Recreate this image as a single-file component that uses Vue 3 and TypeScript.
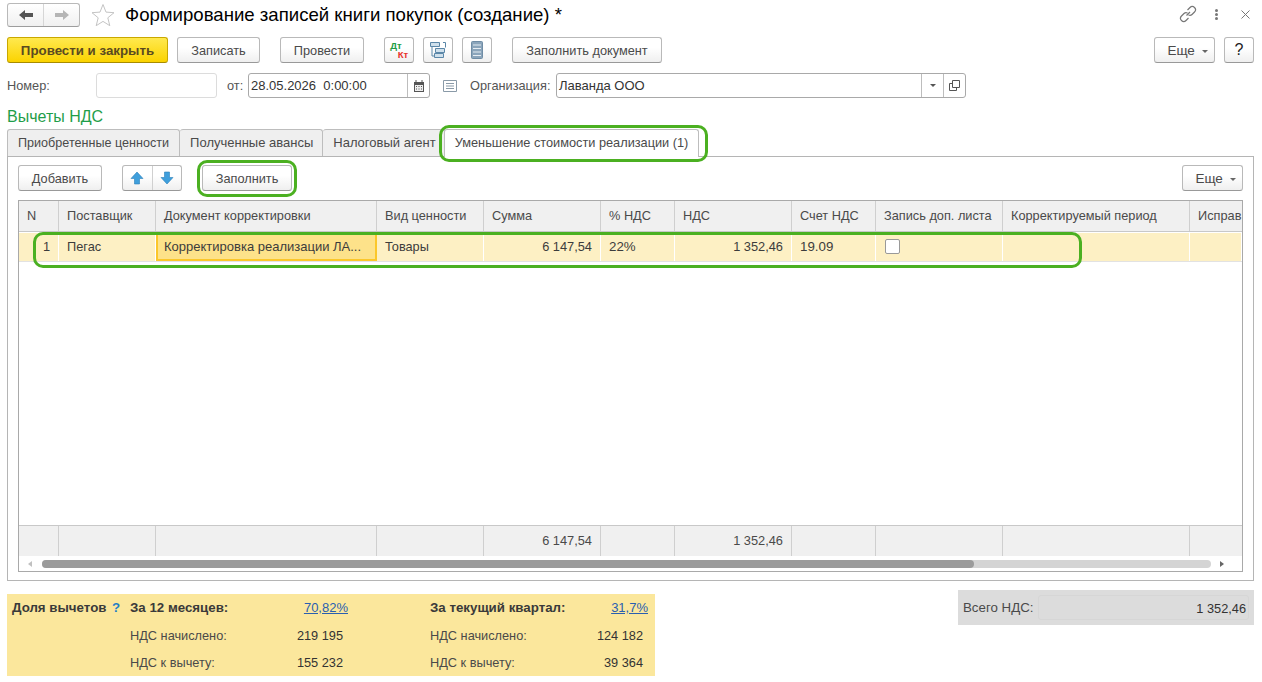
<template>
  <div class="page">
    <header class="title-row">
      <div class="nav-group">
        <button class="nav-btn">
          <svg width="16" height="12" viewBox="0 0 16 12"><path d="M1 6 7 1v3h8v4H7v3z" fill="#555" /></svg>
        </button>
        <button class="nav-btn">
          <svg width="16" height="12" viewBox="0 0 16 12"><path d="M15 6 9 1v3H1v4h8v3z" fill="#b5b5b5" /></svg>
        </button>
      </div>
      <svg class="star" width="24" height="24" viewBox="0 0 24 24">
        <path d="M12 1.5l3 7.6 8 .6-6.200 5.100 2 7.900L12 18.400 5.200 22.700l2-7.900L1 9.700l8-.6z" fill="#fff" stroke="#c4c4c4" />
      </svg>
      <h1 class="title">Формирование записей книги покупок (создание) *</h1>
      <div class="window-tools">
        <svg width="18" height="18" viewBox="0 0 18 18" fill="none" stroke="#777" stroke-width="1.200">
          <path d="M7.500 10.500 11 7M8.500 5l2.500-2.500a3 3 0 0 1 4.500 4.500L13 9.500a3 3 0 0 1-3.500.5M9.500 13 7 15.500A3 3 0 0 1 2.500 11L5 8.500a3 3 0 0 1 3.500-.5" />
        </svg>
        <span class="dots"><i></i><i></i><i></i></span>
        <svg width="11" height="11" viewBox="0 0 11 11" stroke="#777" stroke-width="1"><path d="M1.500 1.500l8 8M9.500 1.500l-8 8" /></svg>
      </div>
    </header>

    <div class="toolbar">
      <button class="btn primary">Провести и закрыть</button>
      <button class="btn w-save">Записать</button>
      <button class="btn w-post">Провести</button>
      <button class="btn icon dtkt"><span class="dt">Дт</span><span class="kt">Кт</span></button>
      <button class="btn icon">
        <svg width="18" height="18" viewBox="0 0 18 18" fill="none" stroke="#5b87a8">
          <path d="M1.500 1.500h9v4h-9zM6.500 7.500h9v4h-9zM5.500 12.500h9v4h-9z" fill="#cfe0ec" />
          <path d="M3 5.500V15h2M14 1.500h2.500v5" />
        </svg>
      </button>
      <button class="btn icon">
        <svg width="12" height="18" viewBox="0 0 12 18">
          <rect x="0.500" y="0.500" width="11" height="17" rx="1" fill="#8ba5bb" stroke="#6f8ca5" />
          <path d="M2 4h8M2 7.500h8M2 11h8M2 14.500h8" stroke="#e6edf3" stroke-width="1.200" />
        </svg>
      </button>
      <button class="btn w-fill-doc">Заполнить документ</button>
      <button class="btn more more-top">Еще <span class="caret"></span></button>
      <button class="btn help">?</button>
    </div>

    <div class="form-row">
      <label class="lbl w-num">Номер:</label>
      <div class="field number-field"></div>
      <label class="lbl from">от:</label>
      <div class="field date-field">
        <span class="field-text">28.05.2026&nbsp; 0:00:00</span>
        <span class="field-btn">
          <svg width="10" height="12" viewBox="0 0 10 12">
            <path d="M0 2h10v10H0z" fill="#555" />
            <path d="M2 0v3M8 0v3" stroke="#555" />
            <path d="M1 5h8v6H1z" fill="#eee" />
            <path d="M2 6.500h1M4.500 6.500h1M7 6.500h1M2 9h1M4.500 9h1M7 9h1" stroke="#555" />
          </svg>
        </span>
      </div>
      <svg class="doc-icon" width="14" height="12" viewBox="0 0 14 12" fill="none" stroke="#8a9aa8">
        <path d="M.5.500h13v11H.5zM3 3.500h8M3 6h8M3 8.500h8" />
      </svg>
      <label class="lbl org">Организация:</label>
      <div class="field org-field">
        <span class="field-text">Лаванда ООО</span>
        <span class="field-btn"><span class="caret dark"></span></span>
        <span class="field-btn">
          <svg width="11" height="11" viewBox="0 0 11 11" fill="none" stroke="#555">
            <path d="M3.500.500h7v7h-7zM3.500 3.500h-3v7h7v-3" />
          </svg>
        </span>
      </div>
    </div>

    <div class="section-title">Вычеты НДС</div>

    <nav class="tabs">
      <div v-for="t in tabs" :key="t" class="tab">{{ t }}</div>
      <div class="tab active">
        Уменьшение стоимости реализации (1)
        <span class="mark mark-tab"></span>
      </div>
    </nav>

    <section class="panel">
      <div class="panel-bar">
        <button class="btn w-add">Добавить</button>
        <div class="arrows">
          <button class="arrow-btn">
            <svg width="14" height="14" viewBox="0 0 14 14"><path d="M7 1l6 6.500H9.500V13h-5V7.500H1z" fill="#3f9fdc" stroke="#2b7fb8" stroke-width=".6" /></svg>
          </button>
          <button class="arrow-btn">
            <svg width="14" height="14" viewBox="0 0 14 14"><path d="M7 13 1 6.500h3.500V1h5v5.500H13z" fill="#3f9fdc" stroke="#2b7fb8" stroke-width=".6" /></svg>
          </button>
        </div>
        <button class="btn w-fill">
          Заполнить
          <span class="mark mark-fill"></span>
        </button>
        <button class="btn more more-table">Еще <span class="caret"></span></button>
      </div>

      <div class="table">
        <div class="grid head">
          <div v-for="h in headers" :key="h" class="cell">{{ h }}</div>
        </div>
        <div class="grid row">
          <div class="cell right">1</div>
          <div class="cell">Пегас</div>
          <div class="cell current">Корректировка реализации ЛА...</div>
          <div class="cell">Товары</div>
          <div class="cell right">6 147,54</div>
          <div class="cell numeric">22%</div>
          <div class="cell right">1 352,46</div>
          <div class="cell numeric">19.09</div>
          <div class="cell"><span class="check"></span></div>
          <div class="cell"></div>
          <div class="cell"></div>
          <span class="mark mark-row"></span>
        </div>
        <div class="table-space"></div>
        <div class="grid foot">
          <div v-for="(f, i) in footer" :key="i" class="cell right">{{ f }}</div>
        </div>
        <div class="scrollbar">
          <span class="sb-arrow left"></span>
          <div class="sb-track"><div class="sb-thumb"></div></div>
          <span class="sb-arrow right"></span>
        </div>
      </div>
    </section>

    <div class="bottom">
      <div class="share">
        <div class="share-name"><b>Доля вычетов</b> <span class="q">?</span></div>
        <div class="share-col year">
          <b>За 12 месяцев:</b><a class="val link">70,82%</a>
          <span>НДС начислено:</span><span class="val num">219 195</span>
          <span>НДС к вычету:</span><span class="val num">155 232</span>
        </div>
        <div class="share-col quarter">
          <b>За текущий квартал:</b><a class="val link">31,7%</a>
          <span>НДС начислено:</span><span class="val num">124 182</span>
          <span>НДС к вычету:</span><span class="val num">39 364</span>
        </div>
      </div>
      <div class="total">
        <span class="total-label">Всего НДС:</span>
        <span class="total-value">1 352,46</span>
      </div>
    </div>
  </div>
</template>

<script setup lang="ts">
const tabs: string[] = ['Приобретенные ценности', 'Полученные авансы', 'Налоговый агент']

const headers: string[] = [
  'N',
  'Поставщик',
  'Документ корректировки',
  'Вид ценности',
  'Сумма',
  '% НДС',
  'НДС',
  'Счет НДС',
  'Запись доп. листа',
  'Корректируемый период',
  'Исправ',
]

const footer: string[] = ['', '', '', '', '6 147,54', '', '1 352,46', '', '', '', '']
</script>

<style>
html,
body {
  margin: 0;
  background: #fff;
  overflow: hidden;
}
</style>

<style scoped>
.page {
  width: 1262px;
  height: 682px;
  box-sizing: border-box;
  padding: 3px 8px 0 7px;
  font: 12.75px "Liberation Sans", Arial, sans-serif;
  color: #4a4a4a;
  overflow: hidden;
}
button {
  font: inherit;
  color: inherit;
  padding: 0;
  margin: 0;
  box-sizing: border-box;
}

/* title */
.title-row {
  display: flex;
  align-items: center;
  height: 24px;
}
.nav-group {
  display: flex;
  width: 73px;
  height: 24px;
  box-sizing: border-box;
  border: 1px solid #b9b9b9;
  border-bottom-color: #9d9d9d;
  border-radius: 3px;
  background: linear-gradient(#fff, #f0f0f0);
}
.nav-btn {
  flex: 1;
  border: 0;
  background: none;
  display: flex;
  align-items: center;
  justify-content: center;
}
.nav-btn + .nav-btn {
  border-left: 1px solid #d6d6d6;
}
.star {
  margin-left: 11px;
}
.title {
  margin: 0 0 0 10px;
  font-size: 18.6px;
  font-weight: 400;
  color: #000;
  white-space: nowrap;
}
.window-tools {
  margin-left: auto;
  display: flex;
  align-items: center;
  margin-right: 3px;
  margin-top: -2px;
}
.dots {
  display: flex;
  flex-direction: column;
  gap: 1px;
  margin: 0 22px 0 18px;
}
.dots i {
  width: 3px;
  height: 3px;
  border-radius: 50%;
  background: #777;
}

/* buttons */
.toolbar {
  display: flex;
  height: 26px;
  margin-top: 10px;
}
.btn {
  position: relative;
  height: 26px;
  border: 1px solid #b9b9b9;
  border-bottom-color: #999;
  border-radius: 3px;
  background: linear-gradient(#fff 40%, #efefef);
  white-space: nowrap;
  text-align: center;
}
.primary {
  width: 161px;
  border-color: #c9a800;
  border-bottom-color: #a88c00;
  background: linear-gradient(#ffe94f, #fbd300);
  font-weight: 700;
  font-size: 13.3px;
  color: #5a4a20;
}
.w-save {
  width: 83px;
  margin-left: 9px;
}
.w-post {
  width: 84px;
  margin-left: 20px;
}
.icon {
  width: 30px;
  margin-left: 9px;
  display: flex;
  align-items: center;
  justify-content: center;
}
.dtkt {
  margin-left: 20px;
  flex-direction: column;
  font-size: 9.5px;
  line-height: 9px;
  font-weight: 700;
}
.dt {
  color: #1e9c45;
  margin-right: 6px;
}
.kt {
  color: #e8322c;
  margin-left: 8px;
}
.w-fill-doc {
  width: 150px;
  margin-left: 20px;
}
.more {
  width: 61px;
  padding-left: 6px;
  font-size: 13.5px;
}
.more-top {
  margin-left: auto;
}
.help {
  width: 30px;
  margin-left: 9px;
  font-size: 16px;
  color: #222;
}
.caret {
  display: inline-block;
  width: 0;
  height: 0;
  margin-left: 3px;
  vertical-align: 2px;
  border: 3px solid transparent;
  border-top-color: #666;
  border-bottom: 0;
}

/* form */
.form-row {
  display: flex;
  align-items: center;
  height: 25px;
  margin-top: 10px;
}
.lbl {
  color: #555;
}
.w-num {
  width: 89px;
}
.field {
  display: flex;
  align-items: center;
  height: 25px;
  box-sizing: border-box;
  border: 1px solid #a9a9a9;
  border-radius: 3px;
  color: #333;
  font-size: 13px;
}
.number-field {
  width: 121px;
  border-color: #dcdcdc;
}
.from {
  margin-left: 10px;
  width: 21px;
}
.date-field {
  width: 182px;
}
.field-text {
  flex: 1;
  padding-left: 2px;
}
.field-btn {
  width: 22px;
  height: 100%;
  box-sizing: border-box;
  border-left: 1px solid #bdbdbd;
  display: flex;
  align-items: center;
  justify-content: center;
}
.caret.dark {
  margin: 0;
  border-top-color: #555;
}
.doc-icon {
  margin-left: 13px;
}
.org {
  margin-left: 13px;
  width: 86px;
}
.org-field {
  width: 410px;
}
.section-title {
  margin-top: 10px;
  font-size: 16px;
  line-height: 18px;
  color: #1f9e4a;
}

/* tabs */
.tabs {
  display: flex;
  height: 27px;
  margin-top: 3px;
  border-bottom: 1px solid #b5b5b5;
  box-sizing: content-box;
}
.tab {
  position: relative;
  box-sizing: border-box;
  height: 27px;
  padding: 0 9px 0 10px;
  border: 1px solid #bdbdbd;
  border-left-width: 0;
  border-bottom: 0;
  border-radius: 3px 3px 0 0;
  background: #efefef;
  font-size: 13px;
  line-height: 26px;
  white-space: nowrap;
}
.tab:first-child {
  padding-right: 10px;
  border-left-width: 1px;
  font-size: 12.6px;
}
.tab.active {
  height: 28px;
  margin-left: -2px;
  padding: 0 10px;
  border-left-width: 1px;
  background: #fff;
  font-size: 12.75px;
  z-index: 1;
}

/* green marks lying over the content */
.mark {
  position: absolute;
  border: 3px solid #4bb021;
  border-radius: 10px;
  pointer-events: none;
  z-index: 2;
}
.mark-tab {
  top: -5px;
  left: -6px;
  right: -10px;
  height: 37px;
  box-sizing: border-box;
}
.mark-fill {
  inset: -6px -6px -7px -6px;
}
.mark-row {
  top: -1px;
  left: 14px;
  width: 1049px;
  height: 36px;
  box-sizing: border-box;
}

/* panel */
.panel {
  box-sizing: border-box;
  height: 424px;
  border: 1px solid #b5b5b5;
  border-top: 0;
  padding: 8px 10px 9px 10px;
}
.panel-bar {
  display: flex;
  height: 26px;
}
.w-add {
  width: 84px;
}
.arrows {
  display: flex;
  width: 60px;
  height: 26px;
  margin-left: 20px;
  box-sizing: border-box;
  border: 1px solid #b9b9b9;
  border-bottom-color: #999;
  border-radius: 3px;
  background: linear-gradient(#fff 40%, #efefef);
}
.arrow-btn {
  flex: 1;
  border: 0;
  background: none;
  display: flex;
  align-items: center;
  justify-content: center;
}
.arrow-btn + .arrow-btn {
  border-left: 1px solid #d0d0d0;
}
.w-fill {
  width: 90px;
  margin-left: 20px;
}
.more-table {
  margin-left: auto;
}

/* table */
.table {
  position: relative;
  margin-top: 9px;
  height: 372px;
  box-sizing: border-box;
  border: 1px solid #a9a9a9;
  display: flex;
  flex-direction: column;
  overflow: visible;
}
.grid {
  position: relative;
  display: grid;
  grid-template-columns: 40px 97px 221px 107px 117px 74px 117px 84px 127px 187px 52px;
}
.cell {
  box-sizing: border-box;
  padding: 0 8px;
  border-right: 2px solid transparent;
  white-space: nowrap;
  overflow: hidden;
  display: flex;
  align-items: center;
}
.cell:last-child {
  border-right: 0;
}
.right {
  justify-content: flex-end;
  padding-right: 8px;
  font-size: 12.8px;
}
.numeric {
  font-size: 13.3px;
}
.head {
  height: 30px;
  background: #f0f0f0;
  border-bottom: 1px solid #c8c8c8;
}
.head .cell,
.foot .cell {
  padding-bottom: 2px;
  border-right: 1px solid #cfcfcf;
  border-left: 0;
}
.head .cell:last-child,
.foot .cell:last-child {
  border-right: 0;
}
.row {
  height: 28px;
  margin-top: 1px;
  background: #fdf0c4;
  border-bottom: 1px solid #e2e2e2;
}
.row .cell {
  padding-bottom: 2px;
  border-right: 1px solid #fff;
  color: #3c3c3c;
}
.row .cell:last-child {
  border-right: 0;
}
.row .current {
  background: #fde28a;
  border: 2px solid #fbc72a;
  padding: 0 6px 1px;
  font-size: 13px;
}
.check {
  width: 13px;
  height: 13px;
  border: 1px solid #999;
  border-radius: 2px;
  background: #fff;
  margin: 0 0 0 1px;
}
.table-space {
  flex: 1;
}
.foot {
  height: 30px;
  background: #f0f0f0;
  border-top: 1px solid #c8c8c8;
}
.scrollbar {
  height: 15px;
  display: flex;
  align-items: center;
  padding: 0 3px;
}
.sb-arrow {
  width: 0;
  height: 0;
  border: 3px solid transparent;
}
.sb-arrow.left {
  margin-left: 6px;
  border-right: 4px solid #c0c0c0;
  border-left: 0;
}
.sb-arrow.right {
  margin-right: 7px;
  border-left: 4px solid #666;
  border-right: 0;
}
.sb-track {
  flex: 1;
  height: 8px;
  margin: 0 9px 0 10px;
  border-radius: 4px;
  background: #d4d4d4;
}
.sb-thumb {
  width: 932px;
  height: 100%;
  border-radius: 4px;
  background: #9b9b9b;
}

/* bottom */
.bottom {
  display: flex;
  align-items: flex-start;
  justify-content: space-between;
  margin-top: 9px;
}
.share {
  display: flex;
  width: 648px;
  height: 82px;
  margin-top: 4px;
  box-sizing: border-box;
  padding: 5px 7px 0 5px;
  background: #fbe79c;
  color: #4a4a4a;
}
.share b {
  color: #3a3a3a;
  white-space: nowrap;
  font-size: 13.3px;
}
.share-name {
  width: 118px;
  line-height: 17px;
  white-space: nowrap;
}
.q {
  color: #1f7fc4;
  font-weight: 700;
  margin-left: 2px;
  font-size: 13.3px;
}
.share-col {
  display: grid;
  grid-auto-rows: 27.5px;
  align-items: start;
  line-height: 17px;
}
.year {
  grid-template-columns: 145px 73px;
  width: 300px;
}
.quarter {
  grid-template-columns: 1fr auto;
  flex: 1;
}
.val {
  text-align: right;
  font-size: 12.75px;
}
.link {
  color: #2a5fb0;
  font-size: 13px;
  text-decoration: underline;
}
.num {
  color: #333;
  padding-right: 5px;
}
.total {
  display: flex;
  align-items: center;
  width: 296px;
  height: 35px;
  box-sizing: border-box;
  padding: 0 5px;
  background: #dcdcdc;
  font-size: 13.3px;
}
.total-label {
  width: 75px;
  color: #4a4a4a;
}
.total-value {
  flex: 1;
  height: 25px;
  line-height: 25px;
  box-sizing: border-box;
  border: 1px solid #d6d6d6;
  border-radius: 3px;
  text-align: right;
  padding-right: 2px;
  font-size: 12.75px;
  color: #333;
}
</style>
